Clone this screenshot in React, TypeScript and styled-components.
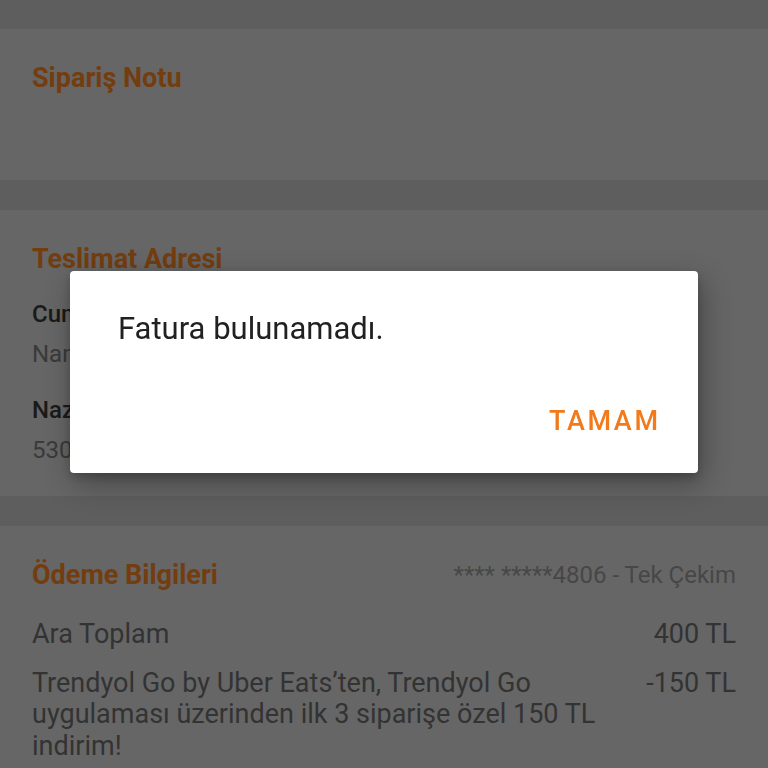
import React from "react";
import styled, { createGlobalStyle } from "styled-components";

const Global = createGlobalStyle`
  html, body { margin: 0; padding: 0; }
  body {
    background: #5e5e5e;
    font-family: Roboto, "Liberation Sans", Arial, sans-serif;
    -webkit-font-smoothing: antialiased;
  }
`;

const Page = styled.div`
  display: flex;
  flex-direction: column;
  gap: 30px;
  padding-top: 29px;
  height: 768px;
  overflow: hidden;
  box-sizing: border-box;
`;

const Card = styled.section<{ $minH?: number; $pb?: number }>`
  background: #666666;
  padding: 33px 32px ${(p) => p.$pb ?? 30}px;
  min-height: ${(p) => (p.$minH ? `${p.$minH}px` : "auto")};
  box-sizing: border-box;
  display: flex;
  flex-direction: column;
  flex-shrink: 0;
`;

const HeadRow = styled.div`
  display: flex;
  align-items: center;
  justify-content: space-between;
`;

const Heading = styled.h2`
  margin: 0;
  font-size: 27px;
  line-height: 32px;
  font-weight: 700;
  color: #733d0f;
`;

const CardInfo = styled.span`
  font-size: 24px;
  line-height: 28px;
  color: #474747;
`;

const Label = styled.div<{ $mt: number }>`
  margin-top: ${(p) => p.$mt}px;
  font-size: 24px;
  line-height: 32px;
  font-weight: 500;
  color: #1a1a1a;
  white-space: nowrap;
`;

const Value = styled.div`
  margin-top: 8px;
  font-size: 24px;
  line-height: 32px;
  color: #3a3a3a;
  white-space: nowrap;
`;

const PriceRow = styled.div<{ $mt: number }>`
  display: flex;
  justify-content: space-between;
  gap: 40px;
  margin-top: ${(p) => p.$mt}px;
  font-size: 27px;
  line-height: 31.5px;
  color: #333333;
`;

const PriceText = styled.span`
  flex: 1;
`;

const Amount = styled.span`
  white-space: nowrap;
`;

const Overlay = styled.div`
  position: fixed;
  inset: 0;
  display: flex;
  justify-content: center;
  align-items: flex-start;
  padding-top: 271px;
  box-sizing: border-box;
`;

const Dialog = styled.div`
  width: 628px;
  height: 202px;
  background: #ffffff;
  border-radius: 4px;
  box-shadow: 4px 10px 30px rgba(0, 0, 0, 0.32), 0 4px 10px rgba(0, 0, 0, 0.18);
  box-sizing: border-box;
  padding: 38px 40px 0 48px;
  display: flex;
  flex-direction: column;
`;

const Message = styled.p`
  margin: 0;
  font-size: 31px;
  line-height: 40px;
  color: #212121;
`;

const Actions = styled.div`
  display: flex;
  justify-content: flex-end;
  margin-top: 56px;
`;

const TextButton = styled.button`
  border: none;
  background: transparent;
  padding: 0;
  font-family: inherit;
  font-size: 27px;
  line-height: 32px;
  font-weight: 500;
  letter-spacing: 2.6px;
  margin-right: -2.6px;
  color: #f27a1a;
  cursor: pointer;
`;

export default function App() {
  return (
    <>
      <Global />
      <Page>
        <Card $minH={151}>
          <Heading>Sipariş Notu</Heading>
        </Card>
        <Card $minH={285}>
          <Heading>Teslimat Adresi</Heading>
          <Label $mt={23}>Cumhuriyet Mahallesi</Label>
          <Value>Namık Kemal Caddesi No: 12, Kadıköy</Value>
          <Label $mt={24}>Nazlı Yılmaz</Label>
          <Value>530 123 45 67</Value>
        </Card>
        <Card>
          <HeadRow>
            <Heading>Ödeme Bilgileri</Heading>
            <CardInfo>**** *****4806 - Tek Çekim</CardInfo>
          </HeadRow>
          <PriceRow $mt={28}>
            <PriceText>Ara Toplam</PriceText>
            <Amount>400 TL</Amount>
          </PriceRow>
          <PriceRow $mt={17}>
            <PriceText>
              Trendyol Go by Uber Eats’ten, Trendyol Go uygulaması üzerinden ilk 3 siparişe özel 150 TL indirim!
            </PriceText>
            <Amount>-150 TL</Amount>
          </PriceRow>
        </Card>
      </Page>
      <Overlay>
        <Dialog role="dialog">
          <Message>Fatura bulunamadı.</Message>
          <Actions>
            <TextButton>TAMAM</TextButton>
          </Actions>
        </Dialog>
      </Overlay>
    </>
  );
}
